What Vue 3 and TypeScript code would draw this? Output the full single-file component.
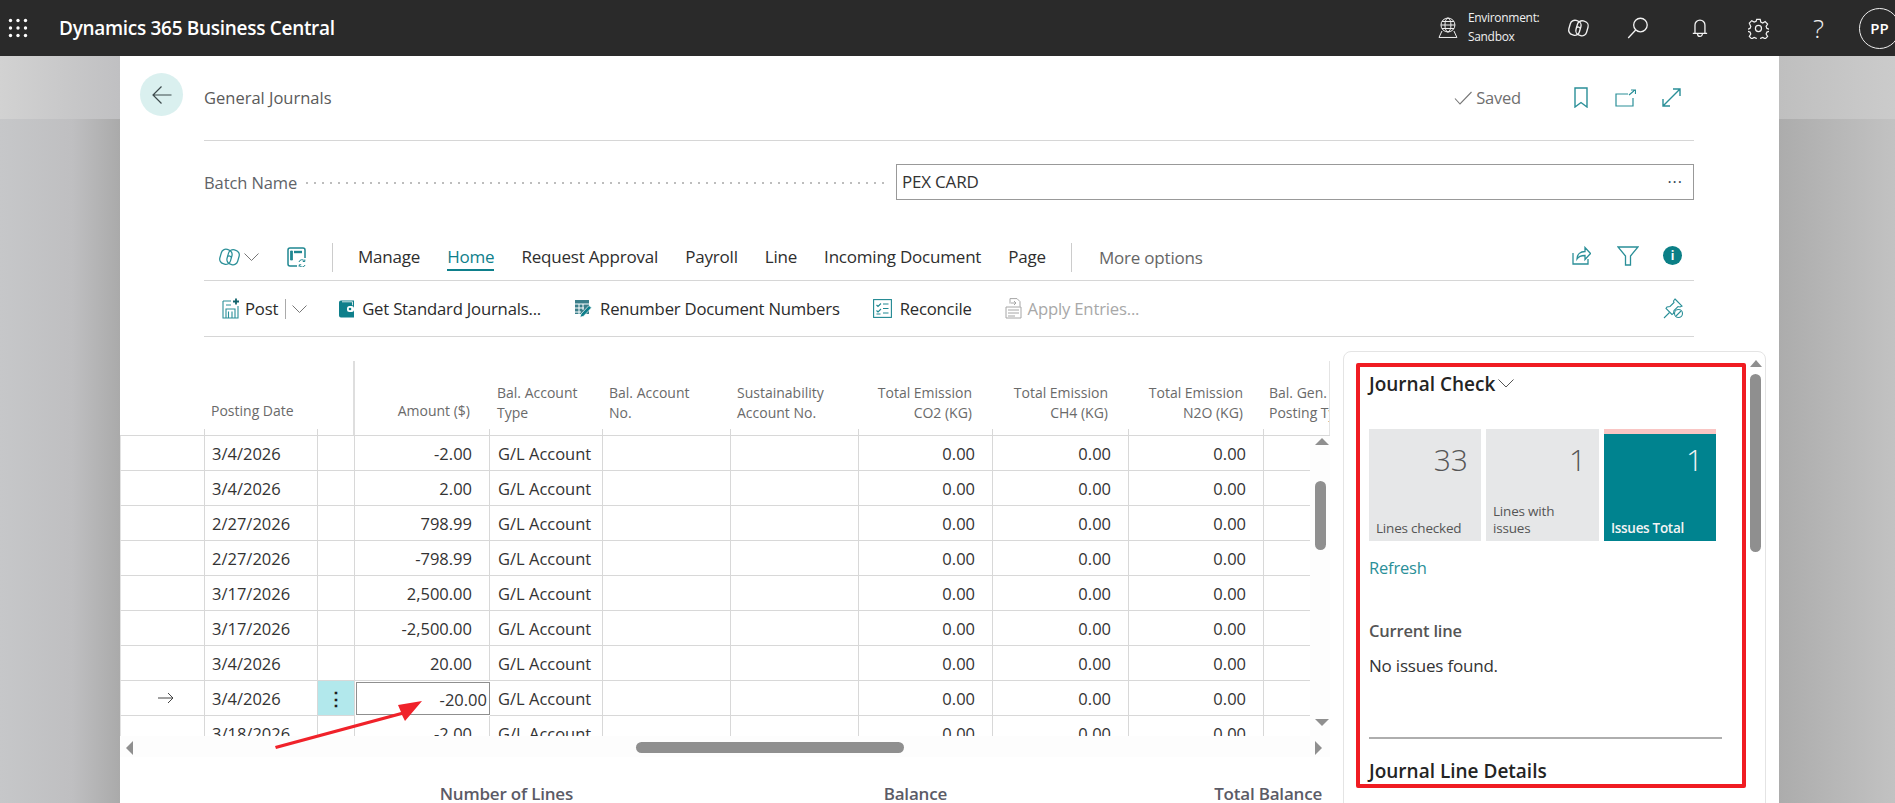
<script setup lang="ts">
const menu: string[] = ['Manage', 'Home', 'Request Approval', 'Payroll', 'Line', 'Incoming Document', 'Page']
interface Row { date: string; amount: string; current?: boolean }
const rows: Row[] = [
  { date: '3/4/2026', amount: '-2.00' },
  { date: '3/4/2026', amount: '2.00' },
  { date: '2/27/2026', amount: '798.99' },
  { date: '2/27/2026', amount: '-798.99' },
  { date: '3/17/2026', amount: '2,500.00' },
  { date: '3/17/2026', amount: '-2,500.00' },
  { date: '3/4/2026', amount: '20.00' },
  { date: '3/4/2026', amount: '-20.00', current: true },
  { date: '3/18/2026', amount: '-2.00' }
]
</script>

<template>
  <div class="shell">
    <header class="topbar">
      <svg class="waffle" width="20" height="20" viewBox="0 0 20 20" fill="#fff">
        <circle cx="2.5" cy="2.5" r="1.7" /><circle cx="10" cy="2.5" r="1.7" /><circle cx="17.5" cy="2.5" r="1.7" />
        <circle cx="2.5" cy="10" r="1.7" /><circle cx="10" cy="10" r="1.7" /><circle cx="17.5" cy="10" r="1.7" />
        <circle cx="2.5" cy="17.5" r="1.7" /><circle cx="10" cy="17.5" r="1.7" /><circle cx="17.5" cy="17.5" r="1.7" />
      </svg>
      <span class="brand">Dynamics 365 Business Central</span>
      <div class="top-right">
        <svg class="t-globe" width="22" height="22" viewBox="0 0 22 22" fill="none" stroke="#f2f2f2" stroke-width="1">
          <circle cx="11" cy="8" r="7" /><ellipse cx="11" cy="8" rx="3" ry="7" /><path d="M4 8h14M5 4.500h12M5 11.500h12M5 14 2 20.500h18L17 14" />
        </svg>
        <div class="env"><span>Environment:</span><span>Sandbox</span></div>
        <svg class="t-copilot" width="23" height="20" viewBox="0 0 24 20" fill="none" stroke="#f2f2f2" stroke-width="1.400">
          <rect x="2.500" y="2" width="11.500" height="15.500" rx="5" transform="rotate(16 8.250 9.750)" />
          <rect x="10" y="2.500" width="11.500" height="15.500" rx="5" transform="rotate(16 15.750 10.250)" />
          <path d="M9.500 9.500c2-1 4-.6 4.500 1" />
        </svg>
        <svg class="t-search" width="22" height="22" viewBox="0 0 22 22" fill="none" stroke="#f2f2f2" stroke-width="1.300">
          <circle cx="13.500" cy="8" r="6.800" /><path d="M8.700 13 1.200 21" />
        </svg>
        <svg class="t-bell" width="16" height="20" viewBox="0 0 16 20" fill="none" stroke="#f2f2f2" stroke-width="1.300">
          <path d="M3 15V7a5 5 0 0 1 10 0v8M.8 15.500h14.400M5.500 15.500a2.500 3 0 0 0 5 0" />
        </svg>
        <svg class="t-gear" width="21" height="21" viewBox="0 0 24 24" fill="none" stroke="#f2f2f2" stroke-width="1.400">
          <circle cx="12" cy="12" r="3.500" />
          <path d="M10 1.500h4l.7 3.200 2.200 1 2.800-1.700 2.800 2.900-1.700 2.700.9 2.300 3 .9v2.400l-3 .9-.9 2.200 1.700 2.800-2.800 2.800-2.800-1.700-2.200.9-.7 3.100h-4l-.7-3.100-2.200-.9-2.800 1.700-2.800-2.800 1.700-2.800-.9-2.200-3-.9v-2.400l3-.9.9-2.300L1.500 5.900l2.800-2.900 2.800 1.700 2.200-1Z" />
        </svg>
        <span class="t-help">?</span>
        <span class="avatar">PP</span>
      </div>
    </header>

    <main class="stage">
      <div class="side side-left"></div>
      <section class="card">
        <div class="head">
          <button class="back" aria-label="Back">
            <svg width="20" height="20" viewBox="0 0 20 20" fill="none" stroke="#3d4a4c" stroke-width="1.200"><path d="M19.500 10H1M9.500 1.500 1 10l8.500 8.500" /></svg>
          </button>
          <div class="head-main">
            <span class="page-title">General Journals</span>
            <span class="saved">
              <svg width="18" height="14" viewBox="0 0 18 14" fill="none" stroke="#777" stroke-width="1.100"><path d="M1 7.500 6 13 17.500 1" /></svg>
              Saved
            </span>
            <svg class="h-book" width="14" height="21" viewBox="0 0 14 21" fill="none" stroke="#2a8f98" stroke-width="1.400"><path d="M1 1h12v19l-6-4.500L1 20Z" /></svg>
            <svg class="h-open" width="21" height="18" viewBox="0 0 21 18" fill="none" stroke="#2a8f98" stroke-width="1.400"><path d="M13 5H1v12h17V9M14 6l6-5M16 1h4.500v4" stroke-width="1.200" /></svg>
            <svg class="h-exp" width="19" height="19" viewBox="0 0 19 19" fill="none" stroke="#2a8f98" stroke-width="1.400"><path d="M1.500 17.500 17.500 1.500M11 1h7v7M1 11v7h7" /></svg>
          </div>
        </div>

        <div class="batch">
          <span class="batch-label">Batch Name</span>
          <span class="leader"></span>
          <div class="batch-input"><span>PEX CARD</span><span class="dots">···</span></div>
        </div>

        <nav class="bar bar-menu">
          <svg class="i-copilot" width="23" height="20" viewBox="0 0 24 20" fill="none" stroke="#2a8f98" stroke-width="1.300">
            <rect x="2.500" y="2" width="11.500" height="15.500" rx="5" transform="rotate(16 8.250 9.750)" />
            <rect x="10" y="2.500" width="11.500" height="15.500" rx="5" transform="rotate(16 15.750 10.250)" />
            <path d="M9.500 9.500c2-1 4-.6 4.500 1" />
          </svg>
          <svg class="i-chev" width="15" height="8" viewBox="0 0 15 8" fill="none" stroke="#777" stroke-width="1"><path d="m.5.500 7 7 7-7" /></svg>
          <svg class="i-layout" width="19" height="20" viewBox="0 0 19 20" fill="none" stroke="#1f8791" stroke-width="1.500">
            <path d="M10 19H3a2 2 0 0 1-2-2V3a2 2 0 0 1 2-2h13a2 2 0 0 1 2 2v8" /><path d="M7 5h8" stroke-width="2.400" /><path d="M3.500 4h2v9h-2Z" fill="#1f8791" stroke-width=".8" />
            <path d="M12 15a3 3 0 0 1 5.500-.8M18 18a3 3 0 0 1-5.500.5M17.800 12.500v2h-2M12.200 19.800v-2h2" stroke-width="1" />
          </svg>
          <span class="vsep"></span>
          <a v-for="m in menu" :key="m" class="menu-item" :class="{ active: m === 'Home' }">{{ m }}</a>
          <span class="vsep vsep2"></span>
          <span class="more">More options</span>
          <span class="spacer"></span>
          <svg class="i-share" width="19" height="19" viewBox="0 0 19 19" fill="none" stroke="#2a8f98" stroke-width="1.300"><path d="M1 7v11h15v-5M5 13c0-5 3.500-7.500 8-7.500V1.500l5.500 6-5.500 6v-4c-4 0-6.500 1-8 3.500Z" /></svg>
          <svg class="i-filter" width="22" height="20" viewBox="0 0 22 20" fill="none" stroke="#2a8f98" stroke-width="1.300"><path d="M1 1h20l-7.500 9v9h-5v-9Z" /></svg>
          <span class="i-info">i</span>
        </nav>

        <div class="bar bar-actions">
          <svg class="a-post" width="17" height="21" viewBox="0 0 17 21" fill="none" stroke="#2a8f98" stroke-width="1.100">
            <path d="M1 3h8M1 3v17h15V8M4 20v-9h9v9M6.500 13.500v6M10 13.500v6M4 7h5" /><path d="M14 .5v6M11 3.500h6" stroke="#12636c" stroke-width="1.800" />
          </svg>
          <span class="act act-post">Post</span>
          <span class="post-sep"></span>
          <svg class="i-chev post-chev" width="15" height="8" viewBox="0 0 15 8" fill="none" stroke="#777" stroke-width="1"><path d="m.5.500 7 7 7-7" /></svg>
          <svg class="a-get" width="15" height="18" viewBox="0 0 15 18"><path d="M0 2.500A2 2 0 0 1 2 .5h13v17H2a2 2 0 0 1-2-2Z" fill="#0e7f8b" /><path d="M3 1.800h10.500v3.500" fill="none" stroke="#fff" stroke-width=".8" /><rect x="8" y="6" width="7" height="6" rx="2.500" fill="#fff" /><circle cx="11" cy="9" r="1.300" fill="#0e7f8b" /></svg>
          <span class="act">Get Standard Journals...</span>
          <svg class="a-ren" width="18" height="19" viewBox="0 0 18 19" fill="none">
            <path d="M1 1h14v14H1Z" fill="#3b7f8a" /><path d="M1 5h14M1 9h9M1 13h6M5 5v10M9 5v6" stroke="#fff" stroke-width="1" />
            <path d="m7 15 8-8.500 2.500 2.300-8 8.500-3.500 1Z" fill="#0e7f8b" stroke="#fff" stroke-width=".7" />
          </svg>
          <span class="act">Renumber Document Numbers</span>
          <svg class="a-rec" width="19" height="19" viewBox="0 0 19 19" fill="none" stroke="#1f8791" stroke-width="1.100">
            <rect x=".6" y=".6" width="17.800" height="17.800" /><path d="M3.500 6l1.500 1.500L8 4.500M3.500 11.500 5 13l3-3M10 5h5.500M10 9.500h5.500M10 14h5.500M3.500 15h4" />
          </svg>
          <span class="act">Reconcile</span>
          <svg class="a-app" width="17" height="21" viewBox="0 0 17 21" fill="none" stroke="#a6a6a6" stroke-width="1"><path d="M5 .6h7l3 3v5M5 .6v5M1 9h15v11H1ZM3 12h11M3 15h11M3 18h7M6 5h5M9 3l2 2-2 2" /></svg>
          <span class="act disabled">Apply Entries...</span>
          <span class="spacer"></span>
          <svg class="a-pin" width="21" height="21" viewBox="0 0 21 21" fill="none" stroke="#2a8f98" stroke-width="1.100">
            <path d="m12 1 7 7-2 1-2-.5-4 4-.5 3-1.500 1-6-6 1-1.500 3-.5 4-4L10.500 3Z" /><path d="M1 20l5.500-5.500" /><circle cx="15.500" cy="15.500" r="4" fill="#fff" /><path d="m13 18 5-5" />
          </svg>
        </div>

        <div class="work">
          <div class="grid-wrap">
            <div class="grid-head">
              <span class="hc"></span>
              <span class="hc hc-bot hc-date"><span>Posting Date</span></span>
              <span class="hc hc-tick"></span>
              <span class="hc hc-amount r hc-bot"><span>Amount ($)</span></span>
              <span class="hc hc-n1"><span>Bal. Account<br />Type</span></span>
              <span class="hc hc-n2"><span>Bal. Account<br />No.</span></span>
              <span class="hc hc-n2"><span>Sustainability<br />Account No.</span></span>
              <span class="hc r"><span>Total Emission<br />CO2 (KG)</span></span>
              <span class="hc r"><span>Total Emission<br />CH4 (KG)</span></span>
              <span class="hc r"><span>Total Emission<br />N2O (KG)</span></span>
              <span class="hc clip"><span>Bal. Gen.<br />Posting Type</span></span>
            </div>
            <div class="grid-mid">
              <div class="grid-rows">
                <div v-for="(row, i) in rows" :key="i" class="row">
                  <span class="c c-mark">
                    <svg v-if="row.current" width="16" height="12" viewBox="0 0 16 12" fill="none" stroke="#444" stroke-width="1"><path d="M0 6h15M10 1l5 5-5 5" /></svg>
                  </span>
                  <span class="c c-date">{{ row.date }}</span>
                  <span class="c c-menu" :class="{ on: row.current }">{{ row.current ? '⋮' : '' }}</span>
                  <span class="c r" :class="{ editing: row.current }">{{ row.amount }}</span>
                  <span class="c">G/L Account</span>
                  <span class="c"></span>
                  <span class="c"></span>
                  <span class="c r">0.00</span>
                  <span class="c r">0.00</span>
                  <span class="c r">0.00</span>
                  <span class="c c-last"></span>
                </div>
              </div>
              <div class="vscroll">
                <i class="tri up"></i>
                <i class="vthumb"></i>
                <i class="tri down"></i>
              </div>
            </div>
            <div class="hscroll">
              <i class="tri left"></i>
              <i class="hthumb"></i>
              <i class="tri right"></i>
            </div>
            <div class="totals">
              <span>Number of Lines</span>
              <span>Balance</span>
              <span>Total Balance</span>
            </div>
            <svg class="annot" width="160" height="50" viewBox="0 0 160 50"><path d="M2 46 128 12l-3-7 24-4-17 20-3-6L3 49Z" fill="#f0222a" /></svg>
          </div>

          <aside class="fact">
            <div class="fact-scroll">
              <i class="tri up small"></i>
              <i class="fthumb"></i>
            </div>
            <div class="fact-mark">
              <h2 class="fact-title">Journal Check
                <svg width="16" height="9" viewBox="0 0 16 9" fill="none" stroke="#555" stroke-width="1"><path d="m.5.500 7.500 7.500 7.500-7.500" /></svg>
              </h2>
              <div class="cues">
                <div class="cue"><span class="v">33</span><span class="l">Lines checked</span></div>
                <div class="cue"><span class="v">1</span><span class="l">Lines with<br />issues</span></div>
                <div class="cue teal"><span class="v">1</span><span class="l">Issues Total</span></div>
              </div>
              <a class="refresh">Refresh</a>
              <div class="cur">Current line</div>
              <div class="none">No issues found.</div>
              <hr class="rule" />
              <h2 class="fact-title second">Journal Line Details</h2>
            </div>
          </aside>
        </div>
      </section>
      <div class="side side-right"></div>
    </main>
  </div>
</template>

<style>
html, body { margin: 0; padding: 0; overflow: hidden; background: #c4c4c4; }
</style>

<style scoped>
* { box-sizing: border-box; }
.shell {
  width: 1895px; height: 803px; overflow: hidden; display: flex; flex-direction: column;
  font-family: "Open Sans", "Noto Sans", sans-serif; color: #2b2b2b; font-size: 15px;
}
.topbar { height: 56px; flex: none; background: #2a2a2a; color: #fff; display: flex; align-items: center; padding-left: 8px; }
.waffle { margin-right: 31px; }
.brand { font-size: 19px; font-weight: 600; letter-spacing: -.3px; }
.top-right { margin-left: auto; display: flex; align-items: center; width: 465px; height: 56px; flex: none; margin-right: -5px; }
.t-globe { margin-left: 2px; }
.env { display: flex; flex-direction: column; font-size: 12px; line-height: 19px; margin: -3px 0 0 9px; color: #f0f0f0; width: 100px; letter-spacing: -.3px; }
.t-search { margin-left: 37px; }
.t-bell { margin-left: 43px; }
.t-gear { margin-left: 40px; }
.t-help { margin-left: 44px; font-size: 26px; font-weight: 300; color: #eee; width: 20px; }
.avatar { margin-left: 26px; width: 41px; height: 41px; border: 1px solid #eee; border-radius: 50%; display: flex; align-items: center; justify-content: center; font-size: 15px; font-weight: 600; flex: none; }

.stage { flex: 1; min-height: 0; display: flex; }
.side-left { width: 120px; flex: none; background: linear-gradient(90deg, #d2d2d2, #c0c0c2) 0 0 / 100% 63px no-repeat, linear-gradient(90deg, #c6c7c9, #bfbfc1 60%, #aaa); }
.side-right { flex: 1; background: linear-gradient(90deg, #bfbfbf, #cbcbcb) 0 0 / 100% 63px no-repeat, linear-gradient(90deg, #acacac, #c2c2c2); }
.card { width: 1659px; flex: none; background: #fff; display: flex; flex-direction: column; position: relative; }

.head { display: flex; padding-left: 20px; height: 85px; flex: none; }
.back { width: 43px; height: 43px; margin-top: 17px; border-radius: 50%; border: 0; padding: 0; background: #daf0ef; display: flex; align-items: center; justify-content: center; flex: none; }
.head-main { flex: 1; margin-left: 21px; margin-right: 85px; border-bottom: 1px solid #d6d6d6; display: flex; align-items: center; padding-bottom: 1px; }
.page-title { font-size: 16.500px; color: #5a5a5a; }
.saved { margin-left: auto; display: flex; align-items: center; gap: 4px; font-size: 16.500px; color: #6f6f6f; letter-spacing: -.2px; }
.h-book { margin-left: 53px; }
.h-open { margin-left: 27px; }
.h-exp { margin-left: 26px; margin-right: 13px; }

.batch { height: 35px; margin: 23px 85px 0 84px; display: flex; align-items: center; flex: none; }
.batch-label { font-size: 16.500px; color: #5f6368; letter-spacing: -.1px; padding-top: 1px; }
.leader { flex: 1; height: 2px; margin: 2px 6px 0 6px; background: radial-gradient(circle, #bdbdbd 1px, transparent 1.100px) 0 0 / 8px 2px repeat-x; }
.batch-input { width: 798px; flex: none; height: 36px; border: 1px solid #999; display: flex; align-items: center; justify-content: space-between; padding: 0 10px 0 5px; font-size: 17px; color: #333; letter-spacing: -.2px; }
.dots { color: #345; font-size: 16px; letter-spacing: 1px; }

.bar { margin: 0 85px 0 84px; display: flex; align-items: center; flex: none; border-bottom: 1px solid #d6d6d6; }
.bar-menu { height: 45px; margin-top: 37px; font-size: 17px; padding-bottom: 2px; }
.bar-actions { height: 56px; font-size: 16.700px; }
.i-copilot { margin-left: 14px; }
.i-chev { margin-left: 3px; }
.i-layout { margin-left: 28px; }
.vsep { width: 1px; height: 29px; background: #ccc; margin-left: 26px; margin-right: 25px; }
.vsep2 { margin-left: -2px; margin-right: 27px; }
.menu-item { margin-right: 27px; letter-spacing: -.2px; color: #2e2e2e; white-space: nowrap; line-height: 28px; height: 28px; border-bottom: 2px solid transparent; }
.menu-item.active { color: #0e7f8b; border-bottom-color: #0e7f8b; }
.more { color: #666; letter-spacing: -.2px; }
.spacer { flex: 1; }
.i-share, .i-filter, .i-info { margin-top: -3px; }
.i-filter { margin-left: 26px; }
.i-info { margin-left: 24px; margin-right: 12px; width: 19px; height: 19px; border-radius: 50%; background: #0b7f86; color: #fff; font-size: 12px; font-weight: 700; display: flex; align-items: center; justify-content: center; }
.a-post { margin-left: 18px; }
.act { margin-left: 8px; letter-spacing: -.2px; white-space: nowrap; }
.act-post { margin-left: 6px; }
.post-sep { width: 1px; height: 20px; background: #aaa; margin-left: 7px; }
.post-chev { margin-left: 6px; }
.a-get { margin-left: 32px; }
.a-ren { margin-left: 33px; }
.a-rec { margin-left: 33px; }
.a-app { margin-left: 33px; }
.a-app + .act { margin-left: 6px; }
.disabled { color: #a8a8a8; }
.a-pin { margin-right: 10px; }

.work { flex: 1; min-height: 0; display: flex; padding-top: 24px; }
.grid-wrap { width: 1210px; flex: none; position: relative; display: flex; flex-direction: column; }
.row { display: grid; grid-template-columns: 85px 113px 37px 135px 113px 128px 128px 134px 136px 135px 46px; }
.grid-head { display: grid; height: 76px; width: 1210px; grid-template-columns: 85px 113px 37px 135px 113px 128px 128px 134px 136px 135px 66px; border-bottom: 1px solid #d8d8d8; }
.hc { display: flex; align-items: flex-end; padding: 0 8px 12px 8px; font-size: 14px; line-height: 20px; color: #6a6a6a; white-space: nowrap; position: relative; overflow: hidden; }
.hc::after { content: ""; position: absolute; right: 0; bottom: 0; height: 6px; width: 1px; background: #d8d8d8; }
.hc:last-child::after { display: none; }
.hc-bot { padding-bottom: 14px; }
.hc-date { padding-left: 6px; }
.hc-n1 { padding-left: 7px; }
.hc-n2 { padding-left: 6px; }
.hc-tick::after { height: 76px; width: 2px; background: #dedede; }
.hc.r { justify-content: flex-end; text-align: right; padding-right: 21px; }
.hc-amount.r { padding-right: 20px; }
.clip { border-right: 1px solid #e4e4e4; padding-left: 5px; }
.grid-mid { height: 300px; display: flex; overflow: hidden; flex: none; }
.grid-rows { width: 1190px; flex: none; }
.row { height: 35px; }
.c { height: 35px; border-right: 1px solid #d8d8d8; border-bottom: 1px solid #d8d8d8; padding: 0 8px; font-size: 16.500px; line-height: 35px; color: #333; white-space: nowrap; overflow: hidden; }
.c-date { padding-left: 7px; }
.c.r { text-align: right; padding-right: 17px; }
.c-mark { display: flex; align-items: center; justify-content: center; padding-left: 14px; border-left: 1px solid #e2e2e2; }
.c-menu { padding: 0; text-align: center; font-size: 18px; font-weight: 700; color: #1e1e1e; }
.c-menu.on { background: #b2e8ec; }
.editing { border: 1px solid #8f8f8f; padding-right: 2px !important; margin: 1px 0 0 1px; height: 33px; line-height: 33px; }
.c-last { border-right: 0; }
.vscroll { width: 20px; flex: none; position: relative; background: #fdfdfd; }
.tri { display: block; width: 0; height: 0; position: absolute; border-style: solid; border-color: transparent; }
.tri.up { top: 2px; left: 5px; border-width: 0 7px 7px; border-bottom-color: #8f8f8f; }
.tri.down { top: 283px; left: 5px; border-width: 7px 7px 0; border-top-color: #8f8f8f; }
.vthumb { display: block; position: absolute; left: 5px; top: 45px; width: 11px; height: 69px; border-radius: 6px; background: #8f8f8f; }
.hscroll { height: 21px; position: relative; background: #fdfdfd; flex: none; width: 1210px; }
.tri.left { left: 6px; top: 5px; border-width: 7px 7px 7px 0; border-right-color: #8f8f8f; }
.tri.right { left: 1195px; top: 5px; border-width: 7px 0 7px 7px; border-left-color: #8f8f8f; }
.hthumb { display: block; position: absolute; left: 516px; top: 6px; width: 268px; height: 11px; border-radius: 6px; background: #8f8f8f; }
.totals { height: 46px; display: grid; grid-template-columns: 453px 374px 375px; justify-items: end; font-size: 17px; font-weight: 600; color: #5b5b66; letter-spacing: -.2px; padding-top: 26px; line-height: 22px; white-space: nowrap; }
.annot { position: absolute; left: 153px; top: 339px; overflow: visible; }

.fact { position: relative; margin: -10px 0 0 13px; width: 423px; height: 460px; border: 1px solid #e4e4e4; border-radius: 8px 8px 0 0; padding: 11px 0 0 12px; flex: none; }
.fact-scroll { position: absolute; right: 3px; top: 8px; width: 12px; height: 200px; }
.tri.small { top: 0; left: 0; border-width: 0 6px 7px; }
.fthumb { display: block; position: absolute; top: 14px; left: 0; width: 11px; height: 178px; border-radius: 6px; background: #8f8f8f; }
.fact-mark { width: 390px; height: 425px; border: 4px solid #f01c22; border-radius: 2px; padding: 0 0 0 9px; overflow: hidden; }
.fact-title { margin: 0; font-size: 19px; font-weight: 600; color: #242424; line-height: 26px; padding-top: 1px; display: flex; align-items: center; gap: 3px; height: 32px; }
.fact-title.second { padding-top: 0; }
.cues { display: flex; gap: 5px; margin-top: 30px; }
.cue { width: 112px; height: 112px; background: #e6e7e8; display: flex; flex-direction: column; justify-content: space-between; padding: 11px 7px 4px 7px; color: #555; }
.cue:nth-child(2) { width: 113px; }
.cue.teal { background: #00838f; border-top: 5px solid #f9c6c4; color: #f4f4f4; padding-top: 6px; }
.v { font-size: 30px; line-height: 40px; text-align: right; padding-right: 6px; font-weight: 300; }
.l { font-size: 13.500px; line-height: 17px; letter-spacing: -.2px; }
.teal .l { font-weight: 600; letter-spacing: -.3px; }
.refresh { display: block; margin-top: 15px; color: #2a8f98; font-size: 16.500px; line-height: 24px; letter-spacing: -.2px; }
.cur { margin-top: 39px; font-size: 16.500px; font-weight: 600; color: #555; line-height: 24px; letter-spacing: -.2px; }
.none { margin-top: 11px; font-size: 17px; line-height: 24px; color: #333; letter-spacing: -.2px; }
.rule { margin: 59px 0 16px 0; width: 353px; height: 2px; border: 0; background: #aeaeae; }
</style>
